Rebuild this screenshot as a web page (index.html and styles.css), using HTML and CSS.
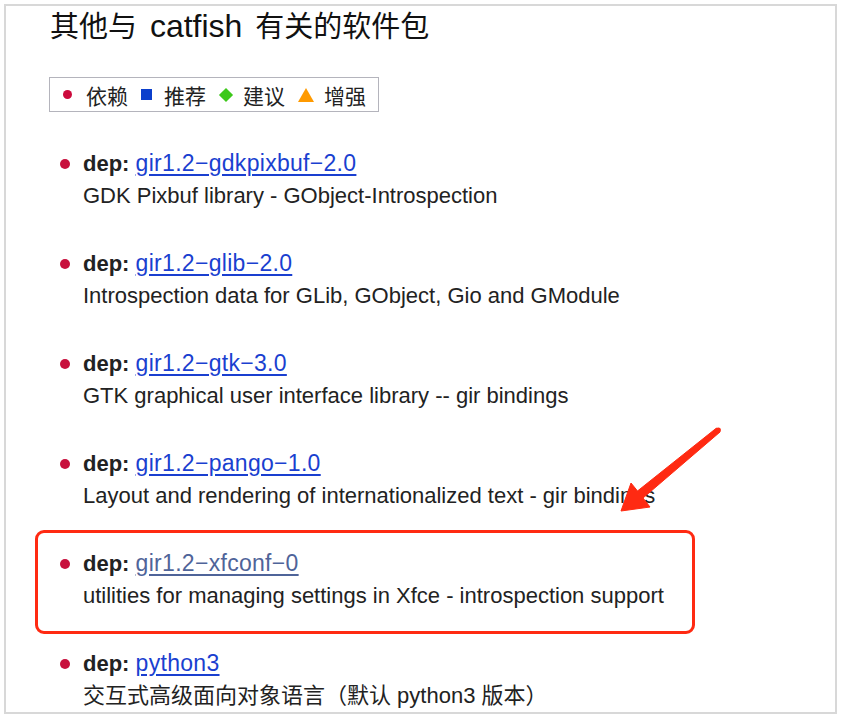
FILE: index.html
```html
<!DOCTYPE html>
<html lang="zh-CN">
<head>
    <meta charset="UTF-8">
    <title>其他与 catfish 有关的软件包</title>
    <link rel="stylesheet" href="styles.css">
</head>
<body>
    <div class="page">
        <h2 class="title">其他与<span class="name"> catfish </span>有关的软件包</h2>
        <div class="legend">
            <span class="icon dot"></span><span class="legend-text">依赖</span>
            <span class="icon square"></span><span class="legend-text">推荐</span>
            <span class="icon diamond"></span><span class="legend-text">建议</span>
            <span class="icon triangle"></span><span class="legend-text">增强</span>
        </div>
        <ul class="deps">
            <li>
                <div class="dep-line"><span class="bullet"></span><b>dep:</b> <a href="#">gir1.2−gdkpixbuf−2.0</a></div>
                <div class="desc">GDK Pixbuf library - GObject-Introspection</div>
            </li>
            <li>
                <div class="dep-line"><span class="bullet"></span><b>dep:</b> <a href="#">gir1.2−glib−2.0</a></div>
                <div class="desc">Introspection data for GLib, GObject, Gio and GModule</div>
            </li>
            <li>
                <div class="dep-line"><span class="bullet"></span><b>dep:</b> <a href="#">gir1.2−gtk−3.0</a></div>
                <div class="desc">GTK graphical user interface library -- gir bindings</div>
            </li>
            <li>
                <div class="dep-line"><span class="bullet"></span><b>dep:</b> <a href="#">gir1.2−pango−1.0</a></div>
                <div class="desc">Layout and rendering of internationalized text - gir bindings</div>
            </li>
            <li class="marked">
                <div class="dep-line"><span class="bullet"></span><b>dep:</b> <a href="#" class="visited">gir1.2−xfconf−0</a></div>
                <div class="desc">utilities for managing settings in Xfce - introspection support</div>
            </li>
            <li>
                <div class="dep-line"><span class="bullet"></span><b>dep:</b> <a href="#">python3</a></div>
                <div class="desc">交互式高级面向对象语言（默认 python3 版本）</div>
            </li>
        </ul>
    </div>
    <!-- annotation arrow -->
    <svg class="arrow" width="842" height="718" viewBox="0 0 842 718">
        <polygon fill="#ff2a12" stroke="#ff2a12" stroke-width="1" stroke-linejoin="round"
            points="716.5,428 720,432 643,498 650,507 621,511 631,483 637.5,491"/>
        <circle cx="718.3" cy="430" r="2.6" fill="#ff2a12"/>
    </svg>
</body>
</html>
```

FILE: styles.css
```css
body {
    margin: 0;
    background: #fff;
    font-family: "Liberation Sans", Arial, "Noto Sans CJK SC", sans-serif;
    color: #222;
}
.page {
    margin: 4px 0 0 4px;
    width: 829px;
    height: 706px;
    border: 2px solid #d8d8d8;
    overflow: hidden;
    position: relative;
}
.title {
    margin: 0;
    padding: 3px 0 0 44px;
    height: 34px;
    font-size: 29px;
    line-height: 34px;
    font-weight: normal;
    color: #111;
}
.title .name {
    font-size: 32px;
    margin: 0 4px;
}
.legend {
    display: inline-flex;
    align-items: center;
    margin: 34px 0 0 43px;
    height: 33px;
    padding: 0 12px 0 13px;
    border: 1px solid #b4b4bc;
    font-size: 21px;
}
.legend-text {
    margin-right: 13px;
}
.legend-text:last-child {
    margin-right: 0;
}
.icon {
    display: inline-block;
    margin-right: 12px;
}
.dot {
    width: 9px;
    height: 9px;
    border-radius: 50%;
    background: #cc0a3c;
    margin-right: 14px;
}
.square {
    width: 11px;
    height: 11px;
    background: #0b3fcc;
}
.diamond {
    width: 10px;
    height: 10px;
    background: #3cc81a;
    transform: rotate(45deg);
    margin: 0 12px 0 2px;
}
.triangle {
    width: 0;
    height: 0;
    border-left: 8px solid transparent;
    border-right: 8px solid transparent;
    border-bottom: 14px solid #ff9a00;
    margin-right: 10px;
}
.deps {
    list-style: none;
    margin: 36px 0 0;
    padding: 0 0 0 54px;
}
.deps li {
    margin-bottom: 36px;
}
.dep-line,
.desc {
    height: 32px;
    font-size: 22px;
    line-height: 32px;
    position: relative;
    padding-left: 23px;
}
.bullet {
    position: absolute;
    left: 0;
    top: 11px;
    width: 10px;
    height: 10px;
    border-radius: 50%;
    background: #c8103c;
}
.dep-line b {
    color: #222;
}
.dep-line a {
    font-size: 23px;
    line-height: 1;
    letter-spacing: 0.3px;
    color: #1a3fd0;
    text-decoration: underline;
    text-underline-offset: 3px;
}
.dep-line a.visited {
    color: #4f6499;
}
.marked {
    position: relative;
}
.marked::after {
    content: "";
    position: absolute;
    left: -25px;
    right: 140px;
    top: -18px;
    bottom: -22px;
    border: 3px solid #ff2a12;
    border-radius: 9px;
}
.arrow {
    position: absolute;
    left: 0;
    top: 0;
    pointer-events: none;
}
```
